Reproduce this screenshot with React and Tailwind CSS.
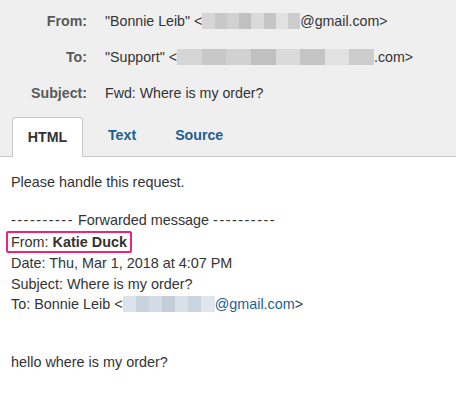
import React from "react";

const font = { fontFamily: '"Liberation Sans", Arial, sans-serif' };

function Blur({ w, tone = "gray" }) {
  const blocks =
    tone === "blue"
      ? ["#dbe3ea", "#c9d3dd", "#d3dce5", "#c3ced9", "#d8e0e8", "#cbd5df", "#e0e6ec"]
      : ["#d6d6d6", "#c8c8c8", "#d1d1d1", "#c0c0c0", "#dadada", "#c5c5c5", "#e1e1e1", "#cccccc"];
  return (
    <span className="inline-flex h-[16px] align-[-3px]" style={{ width: w }}>
      {blocks.map((c, i) => (
        <span key={i} className="flex-1 h-full" style={{ background: c }} />
      ))}
    </span>
  );
}

function HeaderRow({ label, children }) {
  return (
    <div className="flex items-center h-[36px]">
      <div className="w-[87px] text-right font-bold text-[#5a5a5a]">{label}</div>
      <div className="pl-[18px] text-[#333] whitespace-nowrap">{children}</div>
    </div>
  );
}

function Dashes() {
  return <span className="tracking-[1.5px]">----------</span>;
}

export default function App() {
  return (
    <div className="w-[456px] h-[406px] bg-white text-[14.2px] overflow-hidden" style={font}>
      <div className="bg-[#efefef] pt-[4px] border-b border-[#c8c8c8]">
        <HeaderRow label="From:">
          "Bonnie Leib" &lt;<Blur w={98} />@gmail.com&gt;
        </HeaderRow>
        <HeaderRow label="To:">
          "Support" &lt;<Blur w={197} />.com&gt;
        </HeaderRow>
        <HeaderRow label="Subject:">Fwd: Where is my order?</HeaderRow>
        <div className="flex items-end mt-[4px] pl-[12px] h-[40px]">
          <div className="w-[71px] h-[40px] bg-white border border-b-0 border-[#c8c8c8] rounded-t-[4px] -mb-px flex items-center justify-center font-bold text-[#333]">
            HTML
          </div>
          <div className="h-[40px] flex items-center font-bold text-[#1d5f8f] pl-[25px]">Text</div>
          <div className="h-[40px] flex items-center font-bold text-[#1d5f8f] pl-[39px]">Source</div>
        </div>
      </div>
      <div className="px-[11px] pt-[15px] text-[#333] text-[14.4px] leading-[20.2px]">
        <div>Please handle this request.</div>
        <div className="h-[18px]" />
        <div>
          <Dashes /> Forwarded message <Dashes />
        </div>
        <div className="mt-[1px]">
          <span className="inline-block -ml-[5px] px-[3px] border-2 border-[#e8267c] rounded-[2px] leading-[18px]">
            From: <span className="font-bold">Katie Duck</span>
          </span>
        </div>
        <div>Date: Thu, Mar 1, 2018 at 4:07 PM</div>
        <div>Subject: Where is my order?</div>
        <div>
          To: Bonnie Leib &lt;<Blur w={92} tone="blue" />
          <span className="text-[#1d5f8f]">@gmail.com</span>&gt;
        </div>
        <div className="h-[38px]" />
        <div>hello where is my order?</div>
      </div>
    </div>
  );
}
